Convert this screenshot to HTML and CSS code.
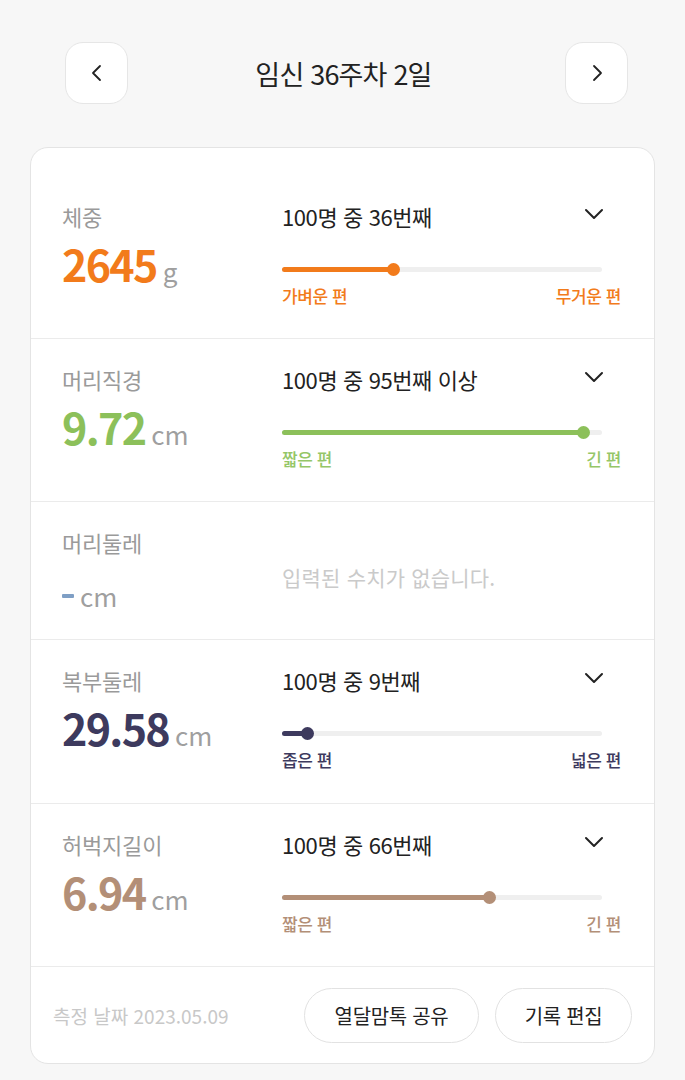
FILE: index.html
```html
<!DOCTYPE html>
<html lang="ko">
<head>
<meta charset="utf-8">
<link rel="stylesheet" href="styles.css">
</head>
<body>
<div class="page">
  <header class="top">
    <button class="nav-btn" aria-label="이전">
      <svg width="14" height="18" viewBox="0 0 14 18"><path d="M10 2 L3 9 L10 16" fill="none" stroke="#222" stroke-width="1.8" stroke-linecap="round" stroke-linejoin="round"/></svg>
    </button>
    <h1 class="title">임신 36주차 2일</h1>
    <button class="nav-btn" aria-label="다음">
      <svg width="14" height="18" viewBox="0 0 14 18"><path d="M4 2 L11 9 L4 16" fill="none" stroke="#222" stroke-width="1.8" stroke-linecap="round" stroke-linejoin="round"/></svg>
    </button>
  </header>

  <section class="card">
    <div class="row first orange">
      <div class="left">
        <div class="label">체중</div>
        <div class="value"><span class="num">2645</span><span class="unit">g</span></div>
      </div>
      <div class="right">
        <div class="rank"><span>100명 중 36번째</span>
          <svg class="chev" width="20" height="12" viewBox="0 0 20 12"><path d="M2 2 L10 10 L18 2" fill="none" stroke="#222" stroke-width="2" stroke-linecap="round" stroke-linejoin="round"/></svg>
        </div>
        <div class="slider"><div class="track"><div class="fill" style="width:35%"></div></div></div>
        <div class="ends"><span>가벼운 편</span><span>무거운 편</span></div>
      </div>
    </div>

    <div class="row green">
      <div class="left">
        <div class="label">머리직경</div>
        <div class="value"><span class="num">9.72</span><span class="unit">cm</span></div>
      </div>
      <div class="right">
        <div class="rank"><span>100명 중 95번째 이상</span>
          <svg class="chev" width="20" height="12" viewBox="0 0 20 12"><path d="M2 2 L10 10 L18 2" fill="none" stroke="#222" stroke-width="2" stroke-linecap="round" stroke-linejoin="round"/></svg>
        </div>
        <div class="slider"><div class="track"><div class="fill" style="width:94.5%"></div></div></div>
        <div class="ends"><span>짧은 편</span><span>긴 편</span></div>
      </div>
    </div>

    <div class="row empty">
      <div class="left">
        <div class="label">머리둘레</div>
        <div class="value"><span class="dash"></span><span class="unit">cm</span></div>
      </div>
      <div class="right nodata">입력된 수치가 없습니다.</div>
    </div>

    <div class="row navy">
      <div class="left">
        <div class="label">복부둘레</div>
        <div class="value"><span class="num">29.58</span><span class="unit">cm</span></div>
      </div>
      <div class="right">
        <div class="rank"><span>100명 중 9번째</span>
          <svg class="chev" width="20" height="12" viewBox="0 0 20 12"><path d="M2 2 L10 10 L18 2" fill="none" stroke="#222" stroke-width="2" stroke-linecap="round" stroke-linejoin="round"/></svg>
        </div>
        <div class="slider"><div class="track"><div class="fill" style="width:8%"></div></div></div>
        <div class="ends"><span>좁은 편</span><span>넓은 편</span></div>
      </div>
    </div>

    <div class="row brown">
      <div class="left">
        <div class="label">허벅지길이</div>
        <div class="value"><span class="num">6.94</span><span class="unit">cm</span></div>
      </div>
      <div class="right">
        <div class="rank"><span>100명 중 66번째</span>
          <svg class="chev" width="20" height="12" viewBox="0 0 20 12"><path d="M2 2 L10 10 L18 2" fill="none" stroke="#222" stroke-width="2" stroke-linecap="round" stroke-linejoin="round"/></svg>
        </div>
        <div class="slider"><div class="track"><div class="fill" style="width:65%"></div></div></div>
        <div class="ends"><span>짧은 편</span><span>긴 편</span></div>
      </div>
    </div>

    <div class="footer">
      <div class="date">측정 날짜 2023.05.09</div>
      <div class="actions">
        <button class="pill wide">열달맘톡 공유</button>
        <button class="pill">기록 편집</button>
      </div>
    </div>
  </section>
</div>
</body>
</html>
```

FILE: styles.css
```css
* { box-sizing: border-box; }
html, body { margin: 0; padding: 0; }
body {
  background: #f7f7f7;
  font-family: "Noto Sans CJK KR", "Noto Sans", sans-serif;
  color: #222;
  width: 685px;
  height: 1080px;
  overflow: hidden;
}
.page { padding-top: 42px; }
.top {
  display: flex;
  align-items: center;
  justify-content: space-between;
  padding: 0 57px 0 65px;
  height: 62px;
}
.nav-btn {
  width: 63px;
  height: 62px;
  border-radius: 18px;
  border: 1px solid #e6e6e6;
  background: #fff;
  display: flex;
  align-items: center;
  justify-content: center;
  padding: 0;
}
.title {
  margin: 0;
  font-size: 27px;
  font-weight: 400;
  letter-spacing: -0.8px;
  color: #222;
  line-height: 1;
  padding-right: 6px;
}
.card {
  margin: 43px 30px 0 30px;
  background: #fff;
  border: 1px solid #e4e4e4;
  border-radius: 18px;
  padding-top: 28px;
  overflow: hidden;
}
.row {
  display: flex;
  padding: 25px 33px 30px 31px;
  border-bottom: 1px solid #ebebeb;
}
.row.navy { padding-bottom: 31px; }
.left { width: 220px; flex: none; }
.right { flex: 1; }
.label {
  font-size: 22px;
  line-height: 30px;
  color: #9a9a9a;
  letter-spacing: -0.2px;
}
.value {
  margin-top: 7px;
  height: 50px;
  display: flex;
  align-items: baseline;
  line-height: 50px;
}
.num {
  font-size: 43px;
  font-weight: 700;
  letter-spacing: -1.7px;
}
.unit {
  font-size: 26px;
  color: #9f9f9f;
  margin-left: 6px;
}
.rank {
  display: flex;
  justify-content: space-between;
  align-items: center;
  height: 30px;
  font-size: 22px;
  letter-spacing: -0.4px;
  color: #222;
  padding-right: 17px;
}
.chev { margin-top: -4px; }
.slider {
  margin-top: 28px;
  height: 20px;
  display: flex;
  align-items: center;
  padding-right: 19px;
}
.track {
  width: 100%;
  height: 5px;
  border-radius: 3px;
  background: #efefef;
}
.fill {
  position: relative;
  height: 5px;
  border-radius: 3px;
}
.fill::after {
  content: "";
  position: absolute;
  right: -6px;
  top: -4px;
  width: 13px;
  height: 13px;
  border-radius: 50%;
  background: inherit;
}
.ends {
  margin-top: 5px;
  display: flex;
  justify-content: space-between;
  font-size: 17px;
  line-height: 24px;
  font-weight: 500;
  letter-spacing: -0.4px;
}
.orange .num, .orange .ends { color: #f27b1b; }
.orange .fill { background: #f27b1b; }
.green .num { color: #8cc05a; }
.green .ends { color: #95c667; }
.green .fill { background: #8cc05a; }
.navy .num, .navy .ends { color: #3d3a5e; }
.navy .fill { background: #3d3a5e; }
.brown .num, .brown .ends { color: #b38f77; }
.brown .fill { background: #b38f77; }

.row.empty { padding-bottom: 18px; }
.empty .value { margin-top: 14px; align-items: center; }
.dash {
  display: inline-block;
  width: 12px;
  height: 4px;
  border-radius: 1px;
  background: #7f9fc5;
}
.nodata {
  align-self: center;
  padding-top: 6px;
  font-size: 21px;
  color: #cacaca;
  letter-spacing: 0.2px;
}
.footer {
  display: flex;
  justify-content: space-between;
  align-items: center;
  padding: 21px 22px 20px 22px;
}
.date {
  font-size: 19px;
  color: #c8c8c8;
  letter-spacing: 0;
}
.actions { display: flex; gap: 16px; }
.pill {
  height: 55px;
  width: 137px;
  border-radius: 28px;
  border: 1px solid #e2e2e2;
  background: #fff;
  font-family: "Noto Sans CJK KR", "Noto Sans", sans-serif;
  font-size: 20px;
  color: #222;
  letter-spacing: -0.3px;
  padding: 0;
}
.pill.wide { width: 175px; }
```
